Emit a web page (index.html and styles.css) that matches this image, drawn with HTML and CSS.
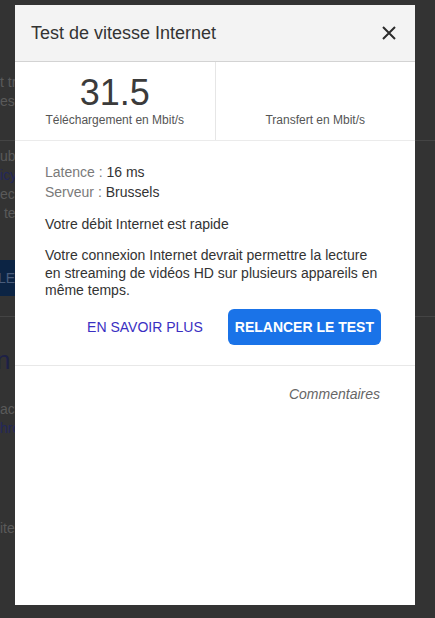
FILE: index.html
```html
<!DOCTYPE html>
<html>
<head>
    <title>Test de vitesse Internet</title>
    <link rel="stylesheet" href="styles.css">
</head>
<body>

    <div class="page">
        <div class="page-bar"></div>
        <p class="bg-text first">t transfert</p>
        <p class="bg-text">es de</p>
        <div class="page-rule"></div>
        <p class="bg-text gap">ub)</p>
        <p class="bg-text link">icy</p>
        <p class="bg-text">ecl</p>
        <p class="bg-text">&nbsp;te</p>
        <div class="bg-button">LE</div>
        <div class="page-rule low"></div>
        <p class="bg-heading">n g</p>
        <p class="bg-text act">act</p>
        <p class="bg-text link">hro</p>
        <p class="bg-text ite">ite</p>
    </div>

    <div class="modal">
        <div class="modal-header">
            <h1>Test de vitesse Internet</h1>
            <button class="close" aria-label="Fermer">
                <svg width="16" height="16" viewBox="0 0 16 16">
                    <path d="M2 2 L14 14 M14 2 L2 14" stroke="#2b2b2b" stroke-width="2" fill="none"/>
                </svg>
            </button>
        </div>

        <div class="stats">
            <div class="stat">
                <div class="stat-value">31.5</div>
                <div class="stat-label">Téléchargement en Mbit/s</div>
            </div>
            <div class="stat">
                <div class="stat-value empty">&nbsp;</div>
                <div class="stat-label">Transfert en Mbit/s</div>
            </div>
        </div>

        <div class="details">
            <p class="info"><span class="key">Latence :</span> 16 ms</p>
            <p class="info"><span class="key">Serveur :</span> Brussels</p>
            <p class="verdict">Votre débit Internet est rapide</p>
            <p class="desc">Votre connexion Internet devrait permettre la lecture en streaming de vidéos HD sur plusieurs appareils en même temps.</p>

            <div class="actions">
                <a href="#" class="more">EN SAVOIR PLUS</a>
                <button class="retry">RELANCER LE TEST</button>
            </div>
        </div>

        <div class="feedback">
            <a href="#">Commentaires</a>
        </div>
    </div>

</body>
</html>
```

FILE: styles.css
```css
body {
    font-family: "Liberation Sans", Arial, sans-serif;
    background-color: #333;
    margin: 0;
    padding: 0;
    height: 618px;
    overflow: hidden;
    position: relative;
}

/* dimmed page behind the dialog */
.page-bar {
    height: 60px;
}

.bg-text {
    margin: 0;
    font-size: 14px;
    line-height: 19px;
    color: #5a5a5a;
    white-space: nowrap;
}

.bg-text.first {
    margin-top: 13px;
}

.bg-text.gap {
    margin-top: 6px;
}

.bg-text.link {
    color: #23275a;
}

.page-rule {
    height: 1px;
    background-color: #444;
    margin-top: 29px;
}

.page-rule.low {
    margin-top: 20px;
}

.bg-button {
    margin-top: 37px;
    width: 60px;
    height: 36px;
    line-height: 36px;
    background-color: #0c2444;
    color: #4a5d7c;
    font-size: 14px;
    text-indent: -2px;
}

.bg-heading {
    margin: 28px 0 0;
    font-size: 26px;
    line-height: 30px;
    color: #1d2046;
    text-indent: -4px;
}

.bg-text.act {
    margin-top: 25px;
}

.bg-text.ite {
    margin-top: 81px;
}

/* dialog */
.modal {
    position: absolute;
    top: 5px;
    left: 15px;
    width: 400px;
    height: 600px;
    background-color: #fff;
    display: flex;
    flex-direction: column;
}

.modal-header {
    height: 56px;
    background-color: #f3f3f3;
    border-bottom: 1px solid #d3d3d3;
    display: flex;
    align-items: center;
    justify-content: space-between;
    padding: 0 18px 0 16px;
}

.modal-header h1 {
    margin: 0;
    font-size: 18px;
    font-weight: normal;
    color: #333;
}

.close {
    background: none;
    border: none;
    padding: 0;
    width: 16px;
    height: 16px;
    cursor: pointer;
}

.stats {
    display: flex;
    height: 78px;
    border-bottom: 1px solid #ebebeb;
}

.stat {
    flex: 1;
    text-align: center;
    padding-top: 12px;
}

.stat + .stat {
    border-left: 1px solid #e6e6e6;
}

.stat-value {
    font-size: 36px;
    line-height: 38px;
    color: #3b3b3b;
}

.stat-label {
    font-size: 12px;
    line-height: 16px;
    color: #555;
}

.details {
    padding: 21px 34px 20px 30px;
    border-bottom: 1px solid #e8e8e8;
}

.details p {
    margin: 0;
    font-size: 14px;
    color: #333;
}

.info {
    line-height: 20px;
}

.key {
    color: #7a7a7a;
}

.verdict {
    line-height: 18px;
    margin-top: 13px !important;
}

.desc {
    line-height: 17.5px;
    margin-top: 14px !important;
}

.actions {
    display: flex;
    justify-content: flex-end;
    align-items: center;
    gap: 25px;
    margin-top: 9px;
}

.more {
    color: #3a2fc2;
    text-decoration: none;
    font-size: 14px;
}

.retry {
    background-color: #1a73e8;
    color: white;
    font-family: inherit;
    font-size: 14px;
    font-weight: bold;
    height: 36px;
    padding: 0 7px;
    border: none;
    border-radius: 6px;
    cursor: pointer;
}

.feedback {
    text-align: right;
    padding: 19px 35px 0 0;
}

.feedback a {
    color: #666;
    font-style: italic;
    font-size: 14px;
    text-decoration: none;
}
```
